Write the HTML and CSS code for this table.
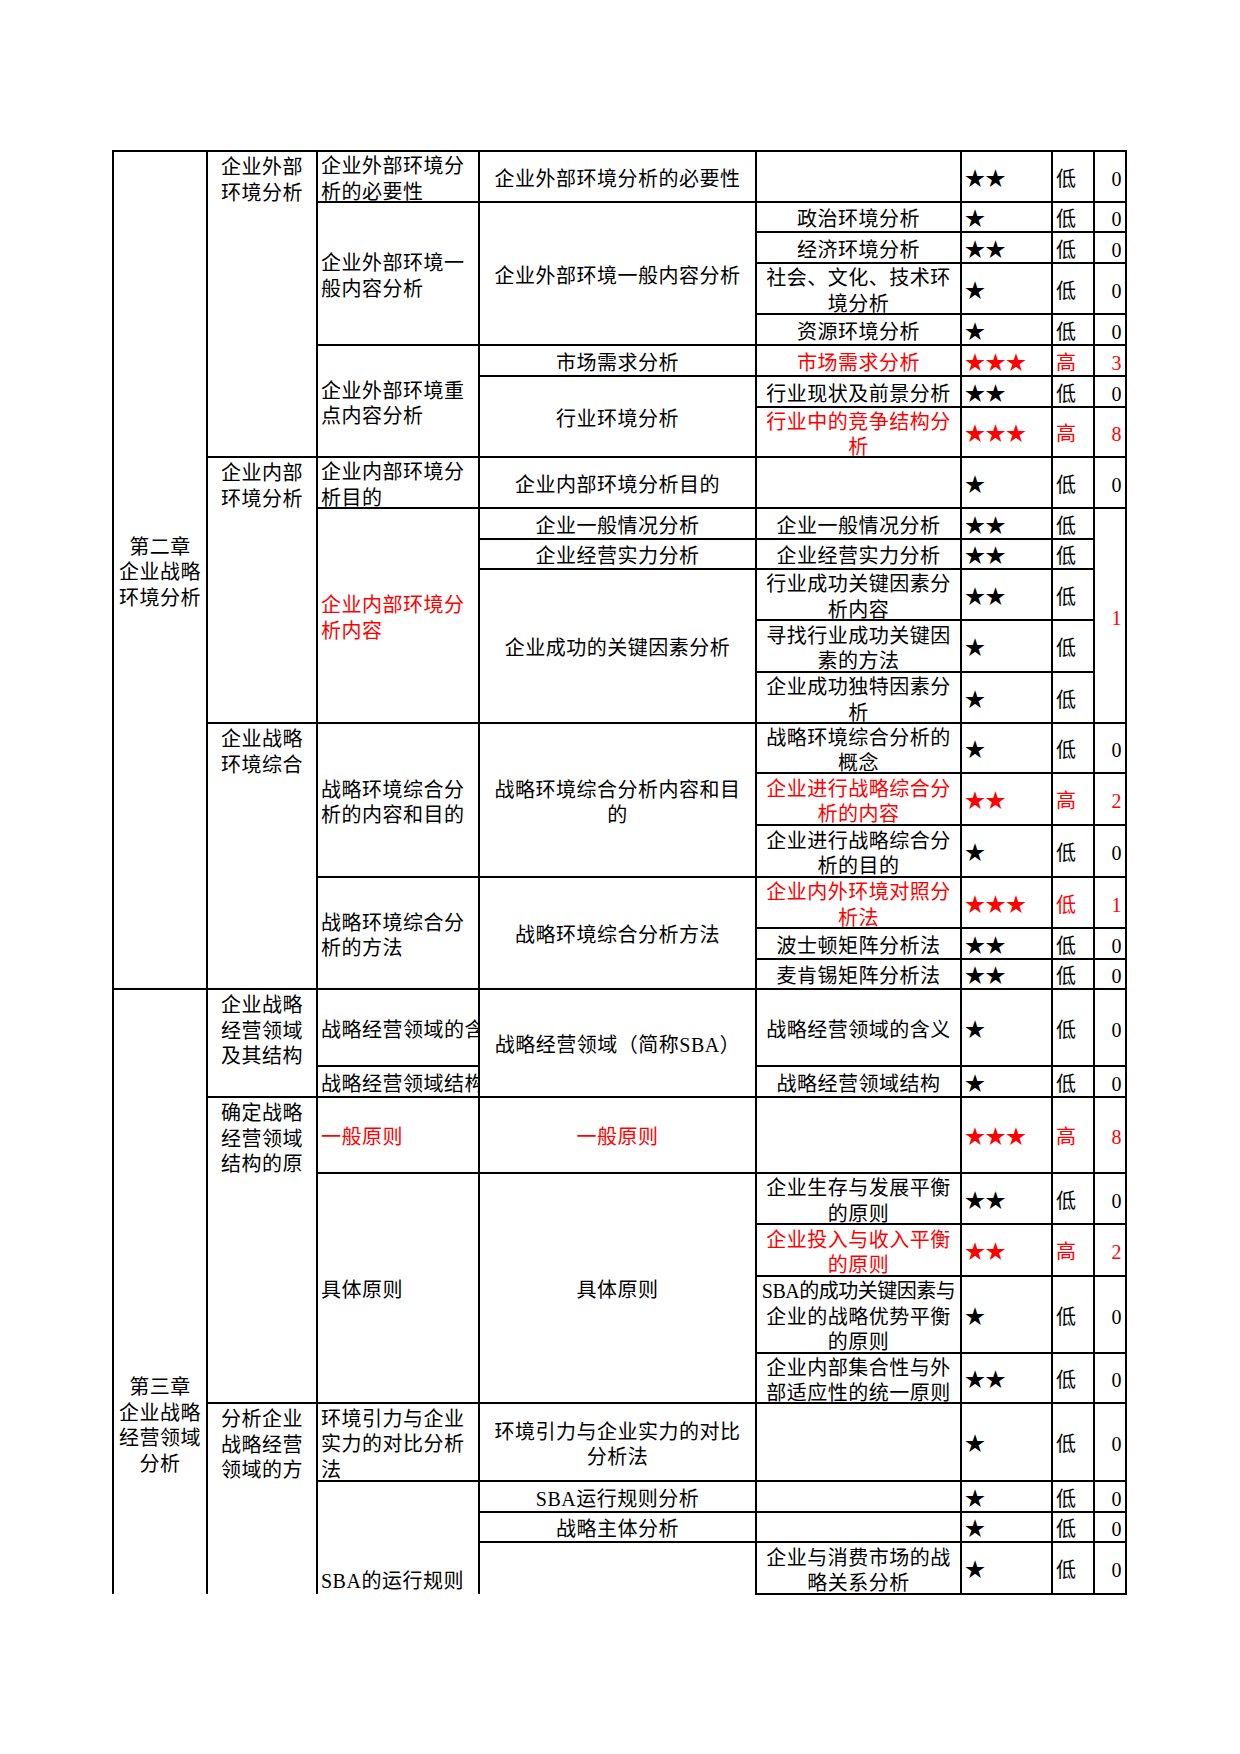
FILE: index.html
```html
<!DOCTYPE html>
<html lang="zh-CN">
<head>
<meta charset="utf-8">
<title>企业战略</title>
<link rel="stylesheet" href="styles.css">
</head>
<body>
<div class="page">
<table class="sheet">
<colgroup>
<col class="w1"><col class="w2"><col class="w3"><col class="w4"><col class="w5"><col class="w6"><col class="w7"><col class="w8">
</colgroup>
<tbody>
<tr class="h51">
  <td class="cc" rowspan="20"><div class="t">第二章<br>企业战略<br>环境分析</div></td>
  <td class="ct" rowspan="8"><div class="t">企业外部<br>环境分析</div></td>
  <td class="cl"><div class="t">企业外部环境分<br>析的必要性</div></td>
  <td class="cc"><div class="t">企业外部环境分析的必要性</div></td>
  <td></td>
  <td class="st"><div class="t">★★</div></td>
  <td class="lv"><div class="t">低</div></td>
  <td class="nm"><div class="t">0</div></td>
</tr>
<tr class="h30">
  <td class="cl" rowspan="4"><div class="t">企业外部环境一<br>般内容分析</div></td>
  <td class="cc" rowspan="4"><div class="t">企业外部环境一般内容分析</div></td>
  <td class="cc"><div class="t">政治环境分析</div></td>
  <td class="st"><div class="t">★</div></td>
  <td class="lv"><div class="t">低</div></td>
  <td class="nm"><div class="t">0</div></td>
</tr>
<tr class="h31">
  <td class="cc"><div class="t">经济环境分析</div></td>
  <td class="st"><div class="t">★★</div></td>
  <td class="lv"><div class="t">低</div></td>
  <td class="nm"><div class="t">0</div></td>
</tr>
<tr class="h51">
  <td class="cc"><div class="t">社会、文化、技术环<br>境分析</div></td>
  <td class="st"><div class="t">★</div></td>
  <td class="lv"><div class="t">低</div></td>
  <td class="nm"><div class="t">0</div></td>
</tr>
<tr class="h31">
  <td class="cc"><div class="t">资源环境分析</div></td>
  <td class="st"><div class="t">★</div></td>
  <td class="lv"><div class="t">低</div></td>
  <td class="nm"><div class="t">0</div></td>
</tr>
<tr class="h31">
  <td class="cl" rowspan="3"><div class="t">企业外部环境重<br>点内容分析</div></td>
  <td class="cc"><div class="t">市场需求分析</div></td>
  <td class="cc red"><div class="t">市场需求分析</div></td>
  <td class="st red"><div class="t">★★★</div></td>
  <td class="lv red"><div class="t">高</div></td>
  <td class="nm red"><div class="t">3</div></td>
</tr>
<tr class="h31">
  <td class="cc" rowspan="2"><div class="t">行业环境分析</div></td>
  <td class="cc"><div class="t">行业现状及前景分析</div></td>
  <td class="st"><div class="t">★★</div></td>
  <td class="lv"><div class="t">低</div></td>
  <td class="nm"><div class="t">0</div></td>
</tr>
<tr class="h50">
  <td class="cc red"><div class="t">行业中的竞争结构分<br>析</div></td>
  <td class="st red"><div class="t">★★★</div></td>
  <td class="lv red"><div class="t">高</div></td>
  <td class="nm red"><div class="t">8</div></td>
</tr>
<tr class="h51">
  <td class="ct" rowspan="6"><div class="t">企业内部<br>环境分析</div></td>
  <td class="cl"><div class="t">企业内部环境分<br>析目的</div></td>
  <td class="cc"><div class="t">企业内部环境分析目的</div></td>
  <td></td>
  <td class="st"><div class="t">★</div></td>
  <td class="lv"><div class="t">低</div></td>
  <td class="nm"><div class="t">0</div></td>
</tr>
<tr class="h31">
  <td class="cl red" rowspan="5"><div class="t">企业内部环境分<br>析内容</div></td>
  <td class="cc"><div class="t">企业一般情况分析</div></td>
  <td class="cc"><div class="t">企业一般情况分析</div></td>
  <td class="st"><div class="t">★★</div></td>
  <td class="lv"><div class="t">低</div></td>
  <td class="nm red" rowspan="5"><div class="t">1</div></td>
</tr>
<tr class="h30">
  <td class="cc"><div class="t">企业经营实力分析</div></td>
  <td class="cc"><div class="t">企业经营实力分析</div></td>
  <td class="st"><div class="t">★★</div></td>
  <td class="lv"><div class="t">低</div></td>
</tr>
<tr class="h51">
  <td class="cc" rowspan="3"><div class="t">企业成功的关键因素分析</div></td>
  <td class="cc"><div class="t">行业成功关键因素分<br>析内容</div></td>
  <td class="st"><div class="t">★★</div></td>
  <td class="lv"><div class="t">低</div></td>
</tr>
<tr class="h52">
  <td class="cc"><div class="t">寻找行业成功关键因<br>素的方法</div></td>
  <td class="st"><div class="t">★</div></td>
  <td class="lv"><div class="t">低</div></td>
</tr>
<tr class="h51">
  <td class="cc"><div class="t">企业成功独特因素分<br>析</div></td>
  <td class="st"><div class="t">★</div></td>
  <td class="lv"><div class="t">低</div></td>
</tr>
<tr class="h50">
  <td class="ct" rowspan="6"><div class="t">企业战略<br>环境综合</div></td>
  <td class="cl" rowspan="3"><div class="t">战略环境综合分<br>析的内容和目的</div></td>
  <td class="cc" rowspan="3"><div class="t">战略环境综合分析内容和目<br>的</div></td>
  <td class="cc"><div class="t">战略环境综合分析的<br>概念</div></td>
  <td class="st"><div class="t">★</div></td>
  <td class="lv"><div class="t">低</div></td>
  <td class="nm"><div class="t">0</div></td>
</tr>
<tr class="h52">
  <td class="cc red"><div class="t">企业进行战略综合分<br>析的内容</div></td>
  <td class="st red"><div class="t">★★</div></td>
  <td class="lv red"><div class="t">高</div></td>
  <td class="nm red"><div class="t">2</div></td>
</tr>
<tr class="h52">
  <td class="cc"><div class="t">企业进行战略综合分<br>析的目的</div></td>
  <td class="st"><div class="t">★</div></td>
  <td class="lv"><div class="t">低</div></td>
  <td class="nm"><div class="t">0</div></td>
</tr>
<tr class="h51">
  <td class="cl" rowspan="3"><div class="t">战略环境综合分<br>析的方法</div></td>
  <td class="cc" rowspan="3"><div class="t">战略环境综合分析方法</div></td>
  <td class="cc red"><div class="t">企业内外环境对照分<br>析法</div></td>
  <td class="st red"><div class="t">★★★</div></td>
  <td class="lv red"><div class="t">低</div></td>
  <td class="nm red"><div class="t">1</div></td>
</tr>
<tr class="h31">
  <td class="cc"><div class="t">波士顿矩阵分析法</div></td>
  <td class="st"><div class="t">★★</div></td>
  <td class="lv"><div class="t">低</div></td>
  <td class="nm"><div class="t">0</div></td>
</tr>
<tr class="h30">
  <td class="cc"><div class="t">麦肯锡矩阵分析法</div></td>
  <td class="st"><div class="t">★★</div></td>
  <td class="lv"><div class="t">低</div></td>
  <td class="nm"><div class="t">0</div></td>
</tr>
<tr class="h77">
  <td class="chap3 nob" rowspan="11"><div class="t">第三章<br>企业战略<br>经营领域<br>分析</div></td>
  <td class="ct" rowspan="2"><div class="t">企业战略<br>经营领域<br>及其结构</div></td>
  <td class="cl clip"><div class="t">战略经营领域的含义</div></td>
  <td class="cc" rowspan="2"><div class="t">战略经营领域（简称SBA）</div></td>
  <td class="cc"><div class="t">战略经营领域的含义</div></td>
  <td class="st"><div class="t">★</div></td>
  <td class="lv"><div class="t">低</div></td>
  <td class="nm"><div class="t">0</div></td>
</tr>
<tr class="h31">
  <td class="cl clip"><div class="t">战略经营领域结构</div></td>
  <td class="cc"><div class="t">战略经营领域结构</div></td>
  <td class="st"><div class="t">★</div></td>
  <td class="lv"><div class="t">低</div></td>
  <td class="nm"><div class="t">0</div></td>
</tr>
<tr class="h76">
  <td class="ct" rowspan="5"><div class="t">确定战略<br>经营领域<br>结构的原</div></td>
  <td class="cl red"><div class="t">一般原则</div></td>
  <td class="cc red"><div class="t">一般原则</div></td>
  <td></td>
  <td class="st red"><div class="t">★★★</div></td>
  <td class="lv red"><div class="t">高</div></td>
  <td class="nm red"><div class="t">8</div></td>
</tr>
<tr class="h51">
  <td class="cl" rowspan="4"><div class="t">具体原则</div></td>
  <td class="cc" rowspan="4"><div class="t">具体原则</div></td>
  <td class="cc"><div class="t">企业生存与发展平衡<br>的原则</div></td>
  <td class="st"><div class="t">★★</div></td>
  <td class="lv"><div class="t">低</div></td>
  <td class="nm"><div class="t">0</div></td>
</tr>
<tr class="h52">
  <td class="cc red"><div class="t">企业投入与收入平衡<br>的原则</div></td>
  <td class="st red"><div class="t">★★</div></td>
  <td class="lv red"><div class="t">高</div></td>
  <td class="nm red"><div class="t">2</div></td>
</tr>
<tr class="h77">
  <td class="cc"><div class="t"><span class="tight">SBA的成功关键因素与</span><br>企业的战略优势平衡<br>的原则</div></td>
  <td class="st"><div class="t">★</div></td>
  <td class="lv"><div class="t">低</div></td>
  <td class="nm"><div class="t">0</div></td>
</tr>
<tr class="h50">
  <td class="cc"><div class="t">企业内部集合性与外<br>部适应性的统一原则</div></td>
  <td class="st"><div class="t">★★</div></td>
  <td class="lv"><div class="t">低</div></td>
  <td class="nm"><div class="t">0</div></td>
</tr>
<tr class="h78">
  <td class="ct nob" rowspan="4"><div class="t">分析企业<br>战略经营<br>领域的方</div></td>
  <td class="cl"><div class="t">环境引力与企业<br>实力的对比分析<br>法</div></td>
  <td class="cc"><div class="t">环境引力与企业实力的对比<br>分析法</div></td>
  <td></td>
  <td class="st"><div class="t">★</div></td>
  <td class="lv"><div class="t">低</div></td>
  <td class="nm"><div class="t">0</div></td>
</tr>
<tr class="h31">
  <td class="cb nob" rowspan="3"><div class="t">SBA的运行规则</div></td>
  <td class="cc"><div class="t">SBA运行规则分析</div></td>
  <td></td>
  <td class="st"><div class="t">★</div></td>
  <td class="lv"><div class="t">低</div></td>
  <td class="nm"><div class="t">0</div></td>
</tr>
<tr class="h30">
  <td class="cc"><div class="t">战略主体分析</div></td>
  <td></td>
  <td class="st"><div class="t">★</div></td>
  <td class="lv"><div class="t">低</div></td>
  <td class="nm"><div class="t">0</div></td>
</tr>
<tr class="h52">
  <td class="nob"></td>
  <td class="cc"><div class="t">企业与消费市场的战<br>略关系分析</div></td>
  <td class="st"><div class="t">★</div></td>
  <td class="lv"><div class="t">低</div></td>
  <td class="nm"><div class="t">0</div></td>
</tr>
</tbody>
</table>
</div>
</body>
</html>
```

FILE: styles.css
```css
html, body {
  margin: 0;
  padding: 0;
  background: #ffffff;
}

.page {
  padding: 150px 0 0 112px;
}

.sheet {
  border-collapse: collapse;
  table-layout: fixed;
  width: 1014px;
  font-family: "Liberation Serif", "Noto Sans CJK SC", serif;
  font-size: 20px;
  line-height: 25.5px;
  letter-spacing: 0.5px;
  color: #000000;
}

.w1 { width: 94px; }
.w2 { width: 110px; }
.w3 { width: 162px; }
.w4 { width: 277px; }
.w5 { width: 205px; }
.w6 { width: 91px; }
.w7 { width: 42px; }
.w8 { width: 32px; }

.h30 { height: 30px; }
.h31 { height: 31px; }
.h50 { height: 50px; }
.h51 { height: 51px; }
.h52 { height: 52px; }
.h76 { height: 76px; }
.h77 { height: 77px; }
.h78 { height: 78px; }

.sheet td {
  border: 2px solid #000000;
  padding: 0 3px;
  vertical-align: middle;
  white-space: nowrap;
}

/* shift text 3px down inside middle-aligned cells, and keep tall text from growing rows */
.sheet .t {
  margin: 0 0 -6px;
}

.sheet td.cc { text-align: center; }
.sheet td.cl { text-align: left; }
.sheet td.st { text-align: left; }
.sheet td.lv { text-align: left; }
.sheet td.nm { text-align: right; }

.sheet td.ct {
  text-align: center;
  vertical-align: top;
  padding-top: 3px;
}

.sheet td.cb {
  text-align: left;
  vertical-align: bottom;
}

.sheet td.chap3 {
  text-align: center;
  vertical-align: top;
  padding-top: 385px;
}

.sheet td.ct .t,
.sheet td.cb .t,
.sheet td.chap3 .t {
  margin: 0;
}

.sheet td.clip { overflow: hidden; }

.sheet td.nob { border-bottom: none; }

.tight { letter-spacing: -0.5px; }

.red { color: #ff0000; }
```
